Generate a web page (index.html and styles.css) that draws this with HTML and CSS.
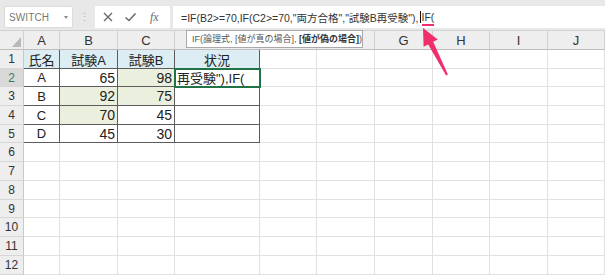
FILE: index.html
```html
<!DOCTYPE html>
<html lang="ja">
<head>
<meta charset="utf-8">
<title>Excel IF</title>
<link rel="stylesheet" href="styles.css">
</head>
<body>
<div class="app">
  <div class="topbar">
    <div class="namebox"><span class="nbtext">SWITCH</span><i class="dd"></i></div>
    <div class="grip">⋮</div>
    <div class="fbtns">
      <svg class="ico" width="12" height="12" viewBox="0 0 12 12"><path d="M2 2L10 10M10 2L2 10" stroke="#6b6b6b" stroke-width="1.4" fill="none"/></svg>
      <svg class="ico" width="13" height="12" viewBox="0 0 13 12"><path d="M1.5 6.5L5 9.5L11.5 2.5" stroke="#6b6b6b" stroke-width="1.6" fill="none"/></svg>
      <span class="fx">fx</span>
    </div>
    <div class="formula"><span>=IF(B2&gt;=70,IF(C2&gt;=70,"両方合格","試験B再受験"),</span><i class="caret"></i><span class="mark">IF(</span></div>
  </div>
  <div class="sheet">
    <div class="ch corner"><i class="tri"></i></div>
    <div class="ch">A</div><div class="ch">B</div><div class="ch">C</div><div class="ch"></div><div class="ch"></div><div class="ch"></div><div class="ch">G</div><div class="ch">H</div><div class="ch">I</div><div class="ch">J</div>

    <div class="rh">1</div>
    <div class="t hdr ctr">氏名</div><div class="t hdr ctr">試験A</div><div class="t hdr ctr">試験B</div><div class="t hdr ctr">状況</div>
    <div></div><div></div><div></div><div></div><div></div><div></div>

    <div class="rh act">2</div>
    <div class="t ctr">A</div><div class="t num">65</div><div class="t num g">98</div><div class="t active">再受験"),IF(</div>
    <div></div><div></div><div></div><div></div><div></div><div></div>

    <div class="rh">3</div>
    <div class="t ctr">B</div><div class="t num g">92</div><div class="t num g">75</div><div class="t"></div>
    <div></div><div></div><div></div><div></div><div></div><div></div>

    <div class="rh">4</div>
    <div class="t ctr">C</div><div class="t num g">70</div><div class="t num">45</div><div class="t"></div>
    <div></div><div></div><div></div><div></div><div></div><div></div>

    <div class="rh">5</div>
    <div class="t ctr">D</div><div class="t num">45</div><div class="t num">30</div><div class="t"></div>
    <div></div><div></div><div></div><div></div><div></div><div></div>

    <div class="rh">6</div>
    <div></div><div></div><div></div><div></div><div></div><div></div><div></div><div></div><div></div><div></div>
    <div class="rh">7</div>
    <div></div><div></div><div></div><div></div><div></div><div></div><div></div><div></div><div></div><div></div>
    <div class="rh">8</div>
    <div></div><div></div><div></div><div></div><div></div><div></div><div></div><div></div><div></div><div></div>
    <div class="rh">9</div>
    <div></div><div></div><div></div><div></div><div></div><div></div><div></div><div></div><div></div><div></div>
    <div class="rh">10</div>
    <div></div><div></div><div></div><div></div><div></div><div></div><div></div><div></div><div></div><div></div>
    <div class="rh">11</div>
    <div></div><div></div><div></div><div></div><div></div><div></div><div></div><div></div><div></div><div></div>
    <div class="rh">12</div>
    <div></div><div></div><div></div><div></div><div></div><div></div><div></div><div></div><div></div><div></div>
  </div>

  <div class="tip">IF(論理式, [値が真の場合], <b>[値が偽の場合]</b>)</div>

  <svg class="arrow" width="605" height="275" viewBox="0 0 605 275">
    <polygon points="423,28 437.8,39.5 433.2,41.8 447.9,74.5 446.1,75.5 428.2,44.4 423.6,46.7" fill="#ee2f6c"/>
  </svg>
</div>
</body>
</html>
```

FILE: styles.css
```css
* { box-sizing: border-box; margin: 0; padding: 0; }
html, body { width: 605px; height: 275px; overflow: hidden; background: #fff; }
body { font-family: "Liberation Sans", "Noto Sans CJK JP", sans-serif; color: #222; }

.app { position: relative; width: 605px; height: 275px; }

/* top formula bar */
.topbar {
  height: 31px;
  background: #e8e8e8;
  border-bottom: 1px solid #d2d2d2;
  display: flex;
  align-items: flex-start;
  padding: 6px 0 0 4px;
}
.namebox {
  width: 69px; height: 22px;
  background: #fff;
  border: 1px solid #dcdcdc;
  border-radius: 2px;
  display: flex; align-items: center; justify-content: space-between;
  padding: 0 4px 0 4px;
}
.nbtext { font-size: 10px; color: #777; letter-spacing: 0.1px; }
.dd {
  width: 0; height: 0;
  border-left: 2.5px solid transparent;
  border-right: 2.5px solid transparent;
  border-top: 3px solid #888;
}
.grip {
  width: 22px; height: 22px;
  display: flex; align-items: center; justify-content: center;
  color: #b0b0b0; font-size: 11px;
}
.fbtns {
  width: 75px; height: 22px;
  background: #fff;
  display: flex; align-items: center;
  padding-left: 7px; gap: 10px;
}
.ico { display: block; }
.fx { font-family: "Liberation Serif", serif; font-style: italic; font-size: 12px; color: #6b6b6b; margin-left: 3px; }
.formula {
  flex: 1; height: 22px;
  margin-left: 3px;
  background: #fff;
  display: flex; align-items: center;
  padding-left: 8px;
  font-size: 10.5px; color: #333;
  white-space: nowrap;
}
.caret { width: 1px; height: 12px; background: #111; margin: 0 1px; }
.mark { border-bottom: 2px solid #ee2f6c; padding-bottom: 1px; margin-bottom: -3px; }

/* sheet grid */
.sheet {
  display: grid;
  grid-template-columns: 24px 36px 58px 57px 85px 57px 58px 58px 57px 58px 57px;
  grid-template-rows: 19px 19px 18px 19px 19px 18px 19px 19px 19px 18px 19px 19px 19px;
}
.sheet > div {
  border-right: 1px solid #e1e1e1;
  border-bottom: 1px solid #e1e1e1;
  display: flex; align-items: center;
  padding: 0 3px;
  font-size: 13px;
  white-space: nowrap;
}
.sheet > .ch {
  background: #eeeeee;
  border-right: 1px solid #d0d0d0;
  border-bottom: 1px solid #bdbdbd;
  justify-content: center;
  color: #333;
  font-size: 13px;
}
.sheet > .corner { justify-content: flex-end; align-items: flex-end; padding: 0 2px 2px 0; }
.tri { width: 9px; height: 10px; background: #b9b9b9; clip-path: polygon(100% 0, 100% 100%, 0 100%); }
.sheet > .rh {
  background: #eeeeee;
  border-right: 1px solid #c8c8c8;
  border-bottom: 1px solid #d6d6d6;
  justify-content: center;
  font-size: 12px; color: #333;
  padding: 0;
}
.sheet > .rh.act { background: #d9d9d9; color: #3d7a58; }

.sheet > .t { border-right-color: #5c5c5c; border-bottom-color: #5c5c5c; }
.sheet > .hdr { background: #dcedf3; }
.sheet > .g { background: #ebf0de; }
.sheet > .ctr { justify-content: center; }
.sheet > .num { justify-content: flex-end; font-size: 14px; padding-right: 2px; }
.sheet > .active {
  outline: 2px solid #217346;
  outline-offset: -1px;
  position: relative; z-index: 1;
  font-size: 13px;
  padding-left: 2px;
}

/* function tooltip over the column headers */
.tip {
  position: absolute;
  left: 186px; top: 30px;
  width: 177px; height: 18px;
  background: #fff;
  border: 1px solid #a9a9a9;
  font-size: 9px; color: #555;
  line-height: 16px;
  padding-left: 5px;
  white-space: nowrap;
  z-index: 2;
}
.tip b { color: #333; }

.arrow { position: absolute; left: 0; top: 0; pointer-events: none; z-index: 3; }
```
